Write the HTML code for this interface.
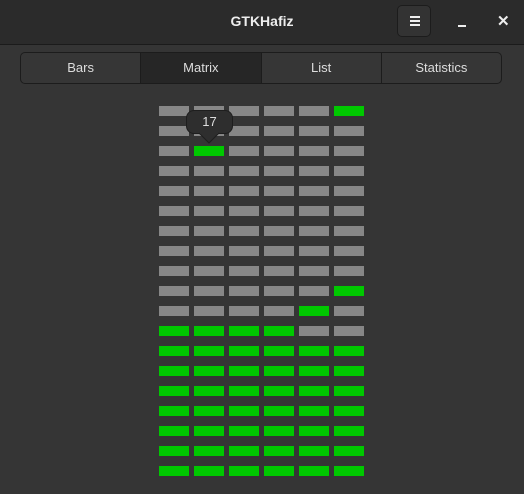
<html><head><style>
body{margin:0;width:524px;height:494px;background:#353535;font-family:"Liberation Sans",sans-serif;position:relative;overflow:hidden}
.hb{position:absolute;left:0;top:0;width:524px;height:44px;background:#2b2b2b;border-bottom:1px solid #1b1b1b}
.t{position:absolute;left:0;width:524px;top:13px;text-align:center;color:#eee;font-weight:bold;font-size:14px}
.menu{position:absolute;left:397px;top:5px;width:34px;height:32px;border:1px solid #1c1c1c;border-radius:5px;background:#333;box-sizing:border-box}
.menu i{position:absolute;left:12px;width:10px;height:2px;background:#eee}
.tabs{position:absolute;left:20px;top:52px;width:482px;height:32px;border:1px solid #1c1c1c;border-radius:5px;box-sizing:border-box;display:flex;overflow:hidden;background:#363636}
.tabs div{flex:1;text-align:center;line-height:30px;color:#ddd;font-size:13px;border-right:1px solid #1c1c1c}
.tabs div:last-child{border:none}
.c{position:absolute;width:30px;height:10px;background:#878787}
.g{background:#00c800}
.tip{position:absolute;left:186px;top:110px;width:47px;height:24px;background:#2e2e2e;border:1px solid #1e1e1e;border-radius:8px;box-sizing:border-box;color:#ddd;font-size:13px;text-align:center;line-height:22px}
</style></head><body>
<div class="hb"></div><div class="t">GTKHafiz</div>
<div class="menu"><i style="top:10px"></i><i style="top:14px"></i><i style="top:18px"></i></div>
<div style="position:absolute;left:458px;top:25px;width:8px;height:2px;background:#eee"></div>
<div style="position:absolute;left:497px;top:12px;color:#eee;font-size:15px;font-weight:bold">✕</div>
<div class="tabs"><div>Bars</div><div style="background:#262626">Matrix</div><div>List</div><div>Statistics</div></div>
<div id="g"></div>
<script>
var gr={0:[5],2:[1],9:[5],10:[4],11:[0,1,2,3]};var h='';
for(var r=0;r<19;r++)for(var c=0;c<6;c++){var gg=r>=12||(gr[r]&&gr[r].indexOf(c)>=0);h+='<div class="c'+(gg?' g':'')+'" style="left:'+(159+35*c)+'px;top:'+(106+20*r)+'px"></div>';}
document.getElementById('g').innerHTML=h;
</script>
<div class="tip">17</div>
<svg style="position:absolute;left:199px;top:132px" width="20" height="12"><path d="M0 1 L10 11 L20 1" fill="#2e2e2e" stroke="#1e1e1e"/><rect x="1" y="0" width="18" height="2" fill="#2e2e2e"/></svg>
</body></html>
